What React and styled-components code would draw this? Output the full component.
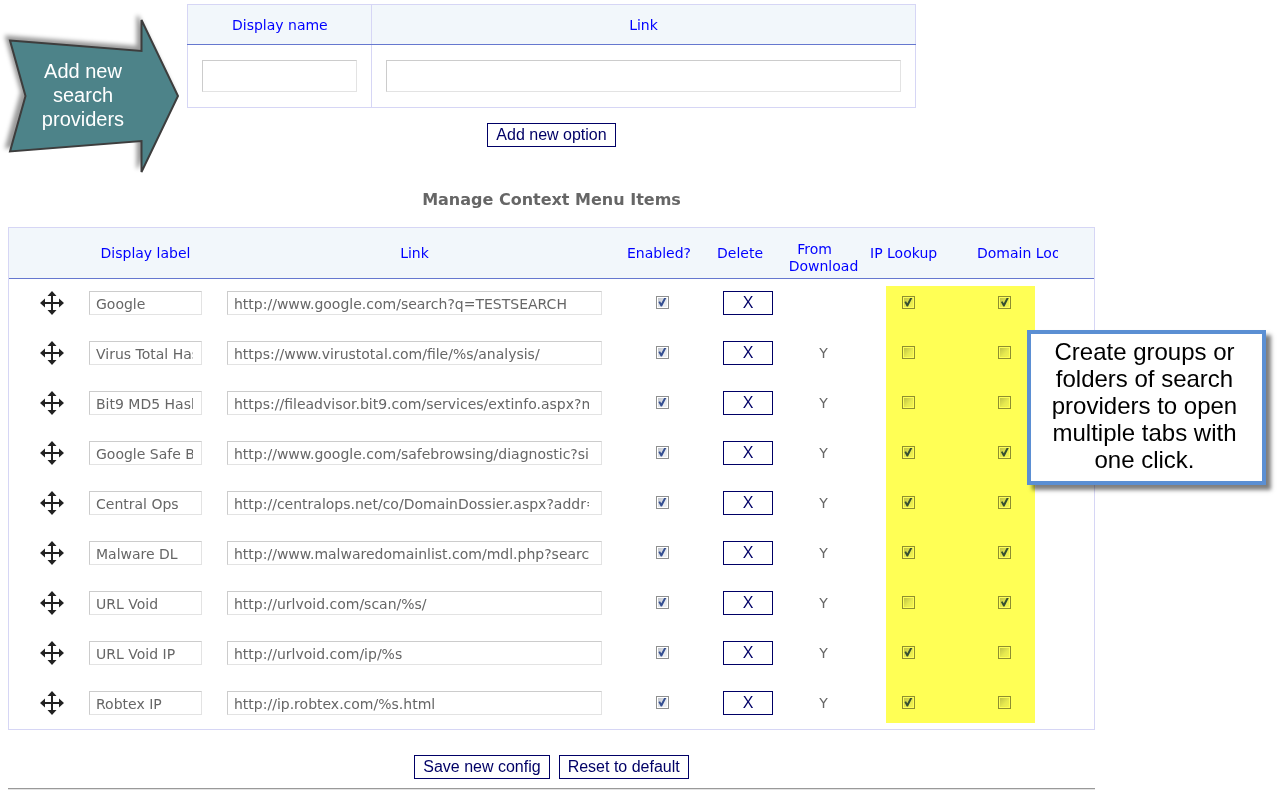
import { useState } from 'react';
import styled, { createGlobalStyle } from 'styled-components';

const GlobalStyle = createGlobalStyle`
  *,
  *::before,
  *::after {
    box-sizing: border-box;
  }
  body {
    margin: 0;
    background-color: #fff;
    color: #666;
    font-family: 'DejaVu Sans', Verdana, sans-serif;
    font-size: 14px;
  }
`;

const providers = [
  { label: 'Google', link: 'http://www.google.com/search?q=TESTSEARCH', download: '', ip: true, domain: true },
  { label: 'Virus Total Hash', link: 'https://www.virustotal.com/file/%s/analysis/', download: 'Y', ip: false, domain: false },
  { label: 'Bit9 MD5 Hash', link: 'https://fileadvisor.bit9.com/services/extinfo.aspx?md5=%s', download: 'Y', ip: false, domain: false },
  { label: 'Google Safe Browsing', link: 'http://www.google.com/safebrowsing/diagnostic?site=%s', download: 'Y', ip: true, domain: true },
  { label: 'Central Ops', link: 'http://centralops.net/co/DomainDossier.aspx?addr=%s', download: 'Y', ip: true, domain: true },
  { label: 'Malware DL', link: 'http://www.malwaredomainlist.com/mdl.php?search=%s', download: 'Y', ip: true, domain: true },
  { label: 'URL Void', link: 'http://urlvoid.com/scan/%s/', download: 'Y', ip: false, domain: true },
  { label: 'URL Void IP', link: 'http://urlvoid.com/ip/%s', download: 'Y', ip: true, domain: false },
  { label: 'Robtex IP', link: 'http://ip.robtex.com/%s.html', download: 'Y', ip: true, domain: false },
];

export default function App() {
  const [groups, setGroups] = useState(['IP Lookup', 'Domain Lookup']);

  const renameGroup = (index, name) =>
    setGroups(groups.map((g, i) => (i === index ? name : g)));

  return (
    <>
      <GlobalStyle />
      <Page>
        <AddForm>
          <AddTable>
            <colgroup>
              <Col $w={184} />
              <Col />
            </colgroup>
            <thead>
              <tr>
                <AddHead id="new-name">Display name</AddHead>
                <AddHead id="new-link">Link</AddHead>
              </tr>
            </thead>
            <tbody>
              <tr>
                <AddCell>
                  <TextInput $tall aria-labelledby="new-name" />
                </AddCell>
                <AddCell>
                  <TextInput $tall aria-labelledby="new-link" />
                </AddCell>
              </tr>
            </tbody>
          </AddTable>
          <Button type="button">Add new option</Button>
        </AddForm>

        <Title>Manage Context Menu Items</Title>

        <TableWrapper>
          <MenuTable>
            <colgroup>
              <Col $w={68} />
              <Col $w={137} />
              <Col />
              <Col $w={94} />
              <Col $w={78} />
              <Col $w={73} />
              <Col $w={96} />
              <Col $w={138} />
            </colgroup>
            <thead>
              <tr>
                <Head />
                <Head>Display label</Head>
                <Head>Link</Head>
                <Head $left={12}>Enabled?</Head>
                <Head $left={8}>Delete</Head>
                <Head $low>
                  From&nbsp;&nbsp;&nbsp;&nbsp;
                  <br />
                  Download
                </Head>
                {groups.map((name, i) => (
                  <Head key={i} $left={i === 1 ? 21 : 10}>
                    <GroupInput
                      aria-label={`Group ${i + 1} name`}
                      value={name}
                      onChange={e => renameGroup(i, e.target.value)}
                    />
                  </Head>
                ))}
              </tr>
            </thead>
            <tbody>
              {providers.map(item => (
                <ProviderRow key={item.label} item={item} />
              ))}
            </tbody>
          </MenuTable>
          <Marker />
          <Callout>
            Create groups or folders of search providers to open multiple tabs
            with one click.
          </Callout>
        </TableWrapper>

        <Actions>
          <Button type="button">Save new config</Button>
          <Button type="button">Reset to default</Button>
        </Actions>
        <Divider />

        <ArrowNote />
      </Page>
    </>
  );
}

function ProviderRow({ item }) {
  return (
    <tr>
      <Cell $handle>
        <MoveIcon />
      </Cell>
      <Cell>
        <TextInput aria-label="Display label" defaultValue={item.label} />
      </Cell>
      <Cell $link>
        <TextInput $link aria-label={`${item.label} link`} defaultValue={item.link} />
      </Cell>
      <Cell>
        <Checkbox aria-label={`${item.label} enabled`} defaultChecked />
      </Cell>
      <Cell>
        <Button type="button" $wide aria-label={`Delete ${item.label}`}>
          X
        </Button>
      </Cell>
      <Cell>{item.download}</Cell>
      <Cell>
        <Checkbox aria-label={`${item.label} IP lookup`} defaultChecked={item.ip} />
      </Cell>
      <Cell $last>
        <Checkbox $start aria-label={`${item.label} domain lookup`} defaultChecked={item.domain} />
      </Cell>
    </tr>
  );
}

function MoveIcon() {
  return (
    <MoveSvg viewBox="0 0 24 24" aria-hidden="true">
      <path d="M12 3v18M3 12h18" stroke="#222" strokeWidth="2" />
      <path
        d="M12 0l4.500 5h-9zM12 24l-4.500-5h9zM0 12l5-4.500v9zM24 12l-5 4.500v-9z"
        fill="#222"
      />
    </MoveSvg>
  );
}

function ArrowNote() {
  return (
    <Arrow>
      <ArrowSvg viewBox="0 0 184 180" aria-hidden="true">
        <path
          d="M10 40.500L141.500 51V20L178 96l-36.500 76v-31L10 151.500L25.500 96z"
          fill="#4d8389"
          stroke="#3d3d3d"
          strokeWidth="2"
        />
      </ArrowSvg>
      <ArrowText>Add new search providers</ArrowText>
    </Arrow>
  );
}

const Page = styled.main`
  position: relative;
  padding: 4px 185px 8px 8px;
`;

const AddForm = styled.section`
  display: flex;
  flex-direction: column;
  align-items: center;
  gap: 15px;
`;

const Col = styled.col`
  width: ${p => (p.$w ? `${p.$w}px` : 'auto')};
`;

const AddTable = styled.table`
  width: 67%;
  table-layout: fixed;
  border-collapse: collapse;
`;

const AddHead = styled.th`
  height: 40px;
  padding: 0;
  border: 1px solid #d6d6f5;
  border-bottom-color: #6678cf;
  background-color: #f2f7fb;
  color: #0000ff;
  font-weight: 400;
`;

const AddCell = styled.td`
  padding: 15px 14px;
  border: 1px solid #d6d6f5;
`;

const TextInput = styled.input.attrs({ type: 'text' })`
  display: block;
  width: 100%;
  height: ${p => (p.$tall ? '32px' : '24px')};
  padding: 1px ${p => (p.$link ? '12px' : '8px')} 0 6px;
  border: 1px solid #e3e3e3;
  border-top-color: #ccc;
  border-left-color: #ccc;
  background-color: #fff;
  color: #666;
  font-family: inherit;
  font-size: 14px;
`;

const Button = styled.button`
  width: ${p => (p.$wide ? '50px' : 'auto')};
  height: 24px;
  padding: 0 8px;
  border: 1px solid #000066;
  background-color: #fff;
  color: #000066;
  font-family: 'Liberation Sans', Arial, sans-serif;
  font-size: 16px;
  line-height: 20px;
  cursor: pointer;
`;

const Title = styled.h1`
  margin: 43px 0 17px;
  font-size: 16px;
  font-weight: 700;
  line-height: 20px;
  text-align: center;
`;

const TableWrapper = styled.div`
  position: relative;
`;

const MenuTable = styled.table`
  width: 100%;
  table-layout: fixed;
  border-collapse: separate;
  border-spacing: 0;
  border: 1px solid #d6d6f5;
`;

const Head = styled.th`
  height: 51px;
  padding: ${p => (p.$low ? '10px' : '0')} 0 0 ${p => p.$left || 0}px;
  border-bottom: 1px solid #6678cf;
  background-color: #f2f7fb;
  color: #0000ff;
  font-weight: 400;
  line-height: 17px;
  text-align: ${p => (p.$left ? 'left' : 'center')};
`;

const GroupInput = styled.input.attrs({ type: 'text' })`
  display: block;
  width: 81px;
  height: 20px;
  padding: 0;
  border: 0;
  background-color: transparent;
  color: inherit;
  font-family: inherit;
  font-size: 14px;
`;

const Cell = styled.td`
  height: 50px;
  padding: 0 12px 2px;
  text-align: center;
  ${p => p.$link && 'padding: 0 13px 2px;'}
  ${p => p.$handle && 'padding: 0 13px 2px 31px;'}
  ${p => p.$last && 'padding-left: 42px;'}
`;

const Checkbox = styled.input.attrs({ type: 'checkbox' })`
  display: grid;
  place-content: center;
  appearance: none;
  width: 13px;
  height: 13px;
  margin: 0 auto 2px ${p => (p.$start ? '0' : 'auto')};
  padding: 1px;
  border: 1px solid #8e8f8f;
  background-color: #f8f8f8;
  background-image: linear-gradient(135deg, #b8bcc4, #e6e9ed 55%, #f6f6f6);
  background-clip: border-box, content-box;
  background-clip: content-box;

  &:checked::after {
    content: '';
    width: 9px;
    height: 9px;
    background-color: #354f91;
    clip-path: polygon(10% 50%, 28% 42%, 42% 64%, 76% 0, 100% 0, 50% 100%, 36% 100%);
  }
`;

const MoveSvg = styled.svg`
  display: block;
  width: 24px;
  height: 24px;
  cursor: move;
`;

/* highlighter stripe over both lookup columns */
const Marker = styled.div`
  position: absolute;
  top: 59px;
  right: 60px;
  bottom: 7px;
  width: 149px;
  background-color: #ffff55;
  mix-blend-mode: multiply;
  pointer-events: none;
`;

const Callout = styled.aside`
  position: absolute;
  top: 103px;
  left: calc(100% - 68px);
  width: 239px;
  padding: 4px 14px 8px 10px;
  border: 4px solid #5b8fd3;
  background-color: #fff;
  box-shadow: 5px 5px 4px rgba(0, 0, 0, 0.5);
  color: #000;
  font-family: 'Liberation Sans', Arial, sans-serif;
  font-size: 24px;
  line-height: 27px;
  text-align: center;
`;

const Actions = styled.div`
  display: flex;
  justify-content: center;
  gap: 9px;
  margin-top: 25px;
`;

const Divider = styled.hr`
  margin: 9px 0 0;
  border: 0;
  border-top: 1px solid #999;
  border-bottom: 1px solid #e3e3e3;
`;

const Arrow = styled.aside`
  position: absolute;
  top: 0;
  left: 0;
  width: 184px;
  height: 180px;
`;

const ArrowSvg = styled.svg`
  display: block;
  width: 100%;
  height: 100%;
  filter: drop-shadow(-4px -4px 2px rgba(0, 0, 0, 0.4));
`;

const ArrowText = styled.p`
  position: absolute;
  top: 59px;
  left: 33px;
  width: 100px;
  margin: 0;
  color: #fff;
  font-family: 'Liberation Sans', Arial, sans-serif;
  font-size: 20px;
  line-height: 24px;
  text-align: center;
`;
